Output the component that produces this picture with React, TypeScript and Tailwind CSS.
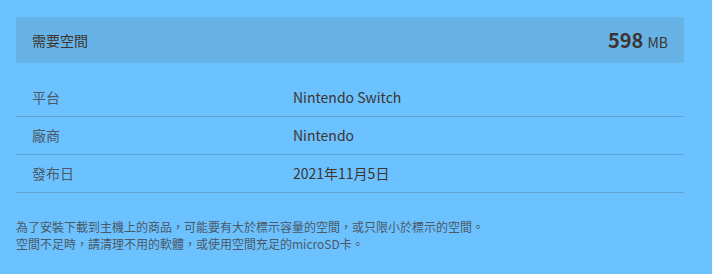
const rows = [
  { label: "平台", value: "Nintendo Switch" },
  { label: "廠商", value: "Nintendo" },
  { label: "發布日", value: "2021年11月5日" },
];

export default function App() {
  return (
    <div
      className="w-[712px] h-[274px] bg-[#6cc2ff] pl-4 pr-[28px] pt-[17px]"
      style={{ fontFamily: '"Noto Sans CJK TC", "Noto Sans", sans-serif' }}
    >
      {/* Required storage */}
      <div className="flex items-center justify-between h-[46px] bg-[#67b3e6] px-4">
        <span className="text-[14px] text-[#3c3530]">需要空間</span>
        <span className="flex items-baseline gap-1 text-[#3c3530]">
          <span className="text-[20px] font-bold leading-none">598</span>
          <span className="text-[14px] leading-none">MB</span>
        </span>
      </div>

      {/* Details table */}
      <div className="mt-[16px]">
        {rows.map((r) => (
          <div
            key={r.label}
            className="flex items-center h-[38px] border-b border-[#5fa3d2] px-4 text-[14px]"
          >
            <span className="w-[261px] text-[#4b5866]">{r.label}</span>
            <span className="text-[#3c3530]">{r.value}</span>
          </div>
        ))}
      </div>

      <p className="mt-[25px] text-[12px] leading-[17px] text-[#4b5866]">
        為了安裝下載到主機上的商品，可能要有大於標示容量的空間，或只限小於標示的空間。
        <br />
        空間不足時，請清理不用的軟體，或使用空間充足的microSD卡。
      </p>
    </div>
  );
}
